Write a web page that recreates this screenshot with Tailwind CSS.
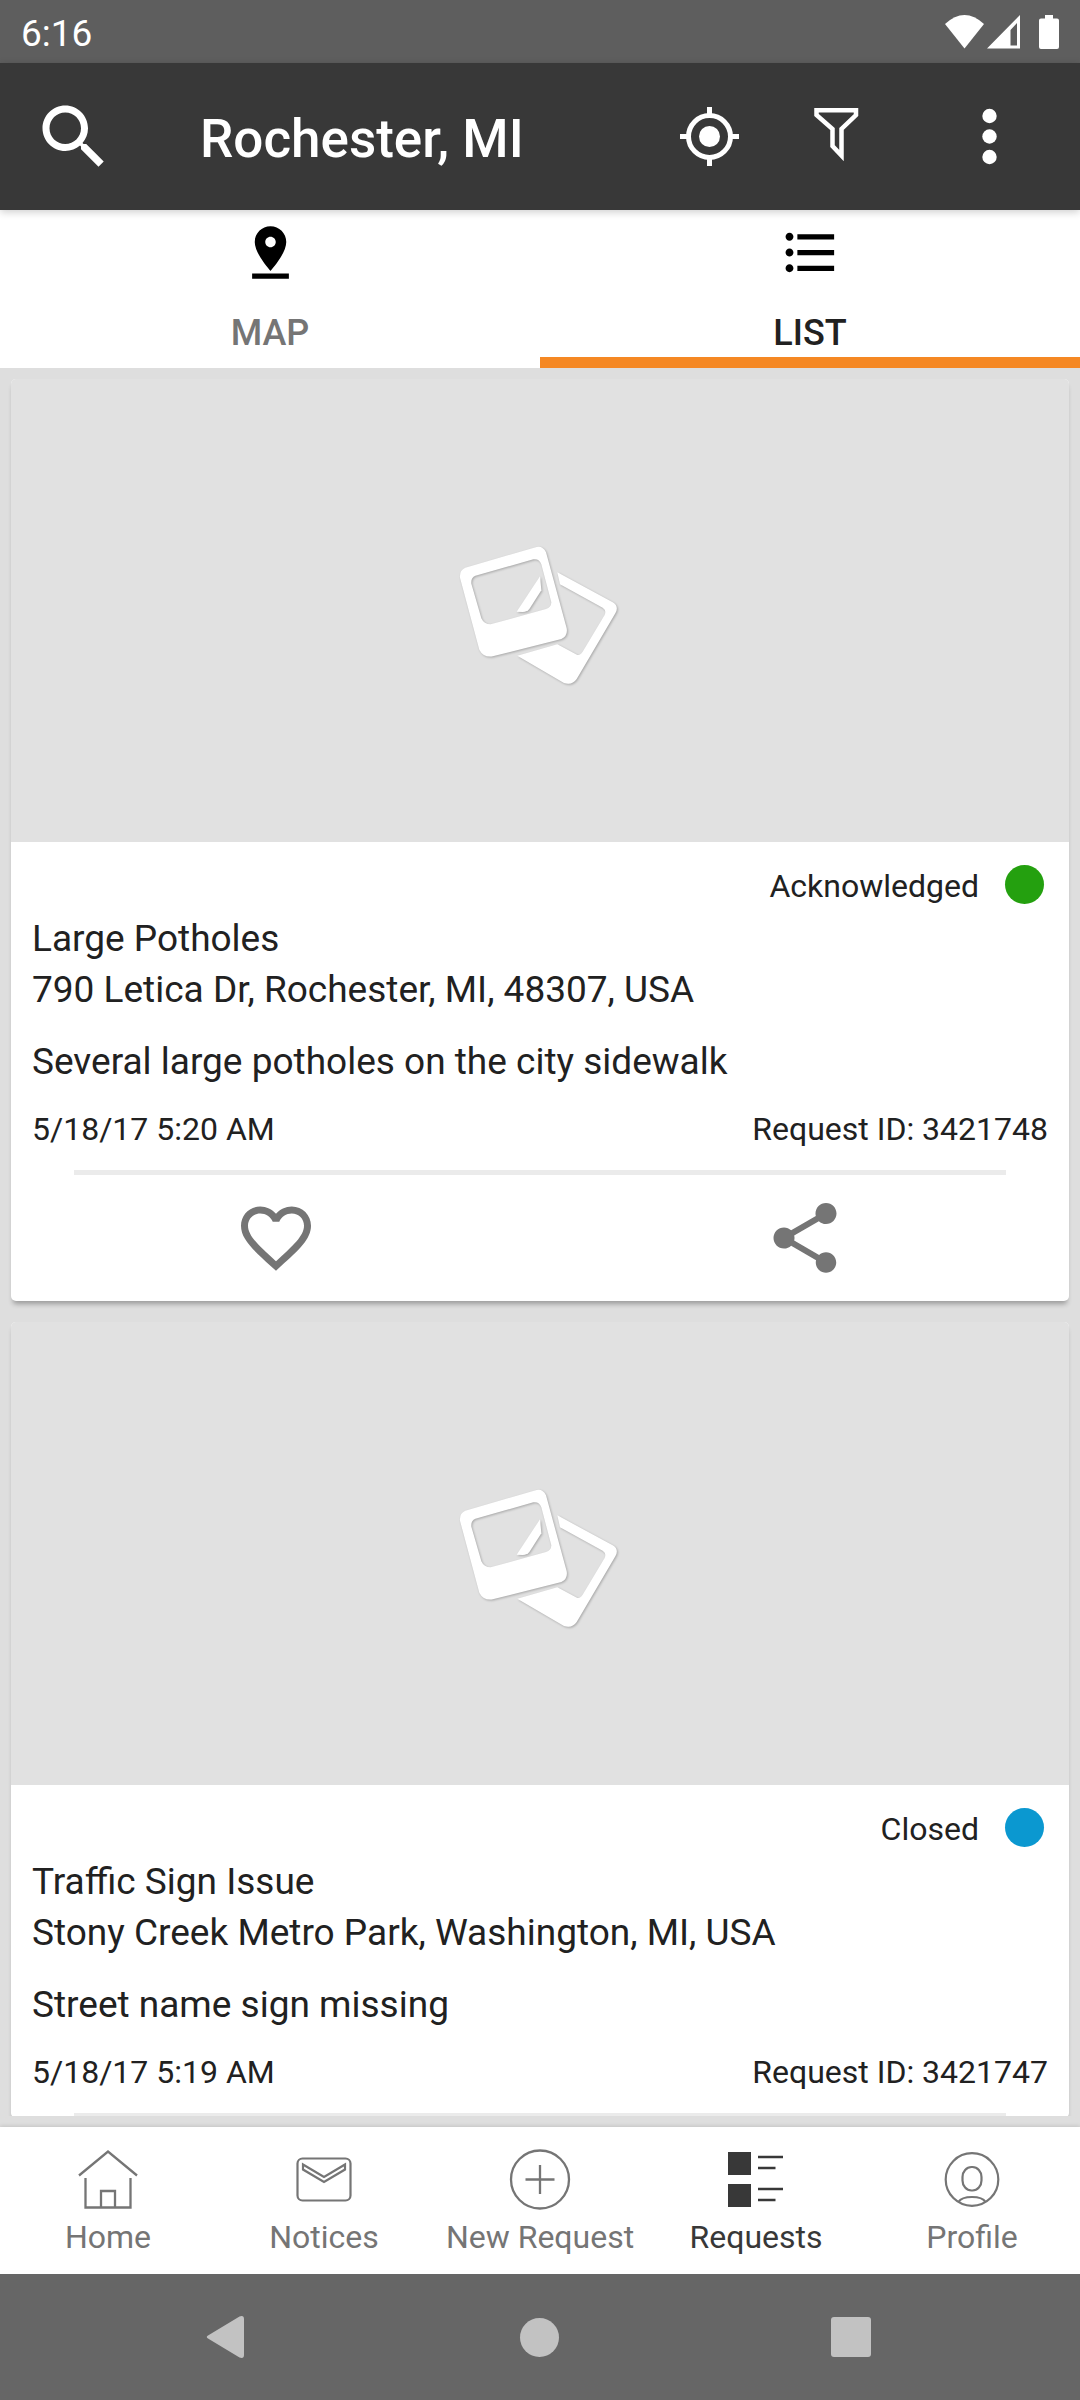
<!DOCTYPE html>
<html lang="en">
  <head>
    <meta charset="UTF-8" />
    <meta name="viewport" content="width=device-width, initial-scale=1.0" />
    <title>Requests - Rochester, MI</title>
    <script src="https://cdn.jsdelivr.net/npm/@tailwindcss/browser@4"></script>
  </head>
  <body class="bg-[#dedede] font-['Roboto',sans-serif] text-[#212121]">
    <!-- Shared placeholder artwork -->
    <svg class="hidden">
      <symbol id="photos" viewBox="0 0 600 540">
        <g fill="#fff" fill-rule="evenodd">
          <path
            d="M352 154L518 244Q538 256 526 277L410 474Q396 494 372 486L232 404L352 370L412 402Q422 402 428 392L494 282Q500 268 488 260L360 190Z"
          />
          <path
            d="M76 140L290 78Q308 74 318 94L380 322Q384 344 364 354L158 406Q130 410 118 386L60 170Q58 148 76 140ZM106 164Q92 170 94 188L124 292Q132 310 152 310L318 264Q334 260 334 244L304 130Q298 112 280 115Z"
          />
          <path d="M230 272L300 166L304 208L268 264Q262 272 248 273Z" />
        </g>
      </symbol>
    </svg>

    <div class="flex flex-col h-screen">
      <!-- Status bar -->
      <div
        class="flex items-center justify-between h-[63px] px-[21px] bg-[#5e5e5e] text-white shrink-0"
      >
        <span class="text-[37px] leading-[44px] pt-1">6:16</span>
        <div class="flex items-center">
          <svg class="w-[39px] h-[34px]" viewBox="0 0 39 34" fill="currentColor">
            <path d="M0 9Q19.500 -9 39 9L19.500 33.500Z" />
          </svg>
          <svg
            class="w-[33px] h-[34px] ml-[3px]"
            viewBox="0 0 33 34"
            fill="currentColor"
            fill-rule="evenodd"
          >
            <path d="M33 0V33.500H0ZM30 8L23.500 15V30.500H30Z" />
          </svg>
          <svg
            class="w-5 h-[34px] ml-[19px]"
            viewBox="0 0 20 34"
            fill="currentColor"
          >
            <path
              d="M6 0h8v3.500h4q2 0 2 2V32q0 2 -2 2H2q-2 0 -2 -2V5.500q0 -2 2 -2h4z"
            />
          </svg>
        </div>
      </div>

      <!-- App bar -->
      <header
        class="relative z-10 flex items-center h-[147px] bg-[#383838] text-white shrink-0 shadow-[0_2px_8px_rgba(0,0,0,0.2)]"
      >
        <button aria-label="Search" class="ml-8">
          <svg class="w-[84px] h-[84px]" viewBox="0 0 24 24" fill="currentColor">
            <path
              d="M15.500 14h-.79l-.28-.27C15.410 12.590 16 11.110 16 9.500 16 5.910 13.090 3 9.500 3S3 5.910 3 9.500 5.910 16 9.500 16c1.610 0 3.090-.59 4.230-1.570l.27.28v.79l5 4.990L20.490 19l-4.990-5zm-6 0C7.010 14 5 11.990 5 9.500S7.010 5 9.500 5 14 7.010 14 9.500 11.990 14 9.500 14z"
            />
          </svg>
        </button>
        <h1 class="flex-1 ml-[84px] pt-1 text-[53px] leading-[62px] font-medium">
          Rochester, MI
        </h1>
        <button aria-label="My location" class="mr-[66px]">
          <svg
            class="w-[63px] h-[63px]"
            viewBox="0 0 63 63"
            fill="none"
            stroke="currentColor"
            stroke-width="5"
          >
            <circle cx="31.500" cy="31.500" r="21" />
            <circle cx="31.500" cy="31.500" r="10.500" fill="currentColor" stroke="none" />
            <path d="M31.500 2v7M31.500 54v7M2 31.500h7M54 31.500h7" />
          </svg>
        </button>
        <button aria-label="Filter" class="mr-[106px]">
          <svg
            class="w-[63px] h-[63px]"
            viewBox="0 0 63 63"
            fill="none"
            stroke="currentColor"
            stroke-width="4.500"
          >
            <path d="M9.500 5.300H49V10L34.500 24V50.500L25.500 41V24L9.500 10Z" />
          </svg>
        </button>
        <button aria-label="More options" class="mr-[77px]">
          <svg class="w-[27px] h-[63px]" viewBox="0 0 27 63" fill="currentColor">
            <circle cx="13.500" cy="11" r="7.200" />
            <circle cx="13.500" cy="31.500" r="7.200" />
            <circle cx="13.500" cy="52" r="7.200" />
          </svg>
        </button>
      </header>

      <!-- Tabs -->
      <nav class="grid grid-cols-2 h-[158px] bg-white shrink-0">
        <button class="flex flex-col items-center pt-[11px] text-[#757575]">
          <svg class="w-[63px] h-[63px]" viewBox="0 0 24 24" fill="#000">
            <path
              d="M18 8c0-3.310-2.690-6-6-6S6 4.690 6 8c0 4.500 6 11 6 11s6-6.500 6-11zm-8 0c0-1.100.9-2 2-2s2 .9 2 2-.89 2-2 2c-1.100 0-2-.9-2-2zM5 20v2h14v-2H5z"
            />
          </svg>
          <span class="mt-[27px] text-[36px] leading-[44px] font-medium">MAP</span>
        </button>
        <button
          class="flex flex-col items-center pt-[11px] border-b-[11px] border-[#f58823]"
        >
          <svg class="w-[63px] h-[63px]" viewBox="0 0 24 24" fill="#000">
            <path
              d="M4 10.500c-.83 0-1.500.67-1.500 1.500s.67 1.500 1.500 1.500 1.500-.67 1.500-1.500-.67-1.500-1.500-1.500zm0-6c-.83 0-1.500.67-1.500 1.500S3.170 7.500 4 7.500 5.500 6.830 5.500 6 4.830 4.500 4 4.500zm0 12c-.83 0-1.500.68-1.500 1.500s.68 1.500 1.500 1.500 1.500-.68 1.500-1.500-.67-1.500-1.500-1.500zM7 19h14v-2H7v2zm0-6h14v-2H7v2zm0-8v2h14V5H7z"
            />
          </svg>
          <span class="mt-[27px] text-[36px] leading-[44px] font-medium">LIST</span>
        </button>
      </nav>

      <!-- Request list -->
      <main class="flex-1 min-h-0 px-[11px] mb-[11px] overflow-hidden">
        <div class="flex flex-col gap-[21px] pt-[11px]">
          <article
            class="bg-white rounded-[5px] overflow-hidden shadow-[0_5px_5px_-2px_rgba(0,0,0,0.3)]"
          >
            <div class="flex items-center justify-center h-[463px] bg-[#e1e1e1]">
              <svg
                class="w-[200px] h-[180px] drop-shadow-[1px_1px_1px_rgba(0,0,0,0.25)]"
              >
                <use href="#photos" />
              </svg>
            </div>
            <div class="px-[21px] pt-[21px]">
              <div class="flex items-end justify-end gap-[26px] h-[42px] mr-1">
                <span class="text-[32px] leading-[38px]">Acknowledged</span>
                <span
                  class="w-[39px] h-[39px] self-center rounded-full bg-[#24a00f]"
                ></span>
              </div>
              <div class="mt-2 text-[37px] leading-[51px]">
                <h2>Large Potholes</h2>
                <p>790 Letica Dr, Rochester, MI, 48307, USA</p>
                <p class="mt-[21px]">Several large potholes on the city sidewalk</p>
              </div>
              <div class="flex justify-between mt-[23px] text-[32px] leading-[38px]">
                <span>5/18/17 5:20 AM</span>
                <span>Request ID: 3421748</span>
              </div>
            </div>
            <div class="mt-[22px] mx-[63px] h-[5px] bg-[#ebebeb]"></div>
            <div class="grid grid-cols-2 py-[21px] text-[#757575]">
              <button aria-label="Like" class="flex justify-center">
                <svg class="w-[84px] h-[84px]" viewBox="0 0 24 24" fill="currentColor">
                  <path
                    d="M16.500 3c-1.740 0-3.410.81-4.500 2.090C10.910 3.810 9.240 3 7.500 3 4.420 3 2 5.420 2 8.500c0 3.780 3.400 6.860 8.550 11.540L12 21.350l1.450-1.320C18.600 15.360 22 12.280 22 8.500 22 5.420 19.580 3 16.500 3zm-4.400 15.550l-.1.100-.1-.1C7.140 14.240 4 11.390 4 8.500 4 6.500 5.500 5 7.500 5c1.540 0 3.040.99 3.570 2.360h1.870C13.460 5.990 14.960 5 16.500 5c2 0 3.500 1.500 3.500 3.500 0 2.890-3.140 5.740-7.900 10.050z"
                  />
                </svg>
              </button>
              <button aria-label="Share" class="flex justify-center">
                <svg class="w-[84px] h-[84px]" viewBox="0 0 24 24" fill="currentColor">
                  <path
                    d="M18 16.080c-.76 0-1.440.3-1.960.77L8.910 12.700c.05-.23.09-.46.09-.7s-.04-.47-.09-.7l7.050-4.110c.54.5 1.250.81 2.040.81 1.660 0 3-1.340 3-3s-1.340-3-3-3-3 1.340-3 3c0 .24.04.47.09.7L8.040 9.810C7.500 9.310 6.790 9 6 9c-1.660 0-3 1.340-3 3s1.340 3 3 3c.79 0 1.500-.31 2.040-.81l7.120 4.160c-.05.21-.08.43-.08.65 0 1.610 1.310 2.920 2.920 2.920s2.920-1.310 2.920-2.920-1.310-2.920-2.920-2.920z"
                  />
                </svg>
              </button>
            </div>
          </article>

          <article
            class="bg-white rounded-[5px] overflow-hidden shadow-[0_5px_5px_-2px_rgba(0,0,0,0.3)]"
          >
            <div class="flex items-center justify-center h-[463px] bg-[#e1e1e1]">
              <svg
                class="w-[200px] h-[180px] drop-shadow-[1px_1px_1px_rgba(0,0,0,0.25)]"
              >
                <use href="#photos" />
              </svg>
            </div>
            <div class="px-[21px] pt-[21px]">
              <div class="flex items-end justify-end gap-[26px] h-[42px] mr-1">
                <span class="text-[32px] leading-[38px]">Closed</span>
                <span
                  class="w-[39px] h-[39px] self-center rounded-full bg-[#0b98d0]"
                ></span>
              </div>
              <div class="mt-2 text-[37px] leading-[51px]">
                <h2>Traffic Sign Issue</h2>
                <p>Stony Creek Metro Park, Washington, MI, USA</p>
                <p class="mt-[21px]">Street name sign missing</p>
              </div>
              <div class="flex justify-between mt-[23px] text-[32px] leading-[38px]">
                <span>5/18/17 5:19 AM</span>
                <span>Request ID: 3421747</span>
              </div>
            </div>
            <div class="mt-[22px] mx-[63px] h-[5px] bg-[#ebebeb]"></div>
          </article>
        </div>
      </main>

      <!-- Bottom navigation -->
      <nav
        class="grid grid-cols-5 h-[147px] bg-white text-[#757575] text-[32px] leading-[38px] shrink-0 shadow-[0_-1px_4px_rgba(0,0,0,0.12)]"
      >
        <a href="#" class="flex flex-col items-center gap-[7px] pt-[21px]">
          <svg
            class="w-[63px] h-[63px]"
            viewBox="0 0 63 63"
            fill="none"
            stroke="currentColor"
            stroke-width="2.300"
          >
            <path
              d="M2 27.500L31 3.500L60 27.500M8.500 30V59.500H53.500V30M24 59V43H38V59"
            />
          </svg>
          <span class="whitespace-nowrap">Home</span>
        </a>
        <a href="#" class="flex flex-col items-center gap-[7px] pt-[21px]">
          <svg
            class="w-[63px] h-[63px]"
            viewBox="0 0 63 63"
            fill="none"
            stroke="currentColor"
            stroke-width="2.200"
          >
            <rect x="4.500" y="10.500" width="53" height="42" rx="5" />
            <path
              d="M10 16.500L31 29L52 16.500V21.500L31 34L10 21.500Z"
            />
          </svg>
          <span class="whitespace-nowrap">Notices</span>
        </a>
        <a href="#" class="flex flex-col items-center gap-[7px] pt-[21px]">
          <svg
            class="w-[63px] h-[63px]"
            viewBox="0 0 63 63"
            fill="none"
            stroke="currentColor"
            stroke-width="2.300"
          >
            <circle cx="31" cy="31.500" r="29" />
            <path d="M31 17v29M16.500 31.500h29" />
          </svg>
          <span class="whitespace-nowrap">New Request</span>
        </a>
        <a
          href="#"
          aria-current="page"
          class="flex flex-col items-center gap-[7px] pt-[21px] text-[#383838]"
        >
          <svg
            class="w-[63px] h-[63px]"
            viewBox="0 0 63 63"
            fill="none"
            stroke="currentColor"
            stroke-width="2.300"
          >
            <path
              fill="currentColor"
              stroke="none"
              d="M3 4h23v23H3zM3 36h23v23H3z"
            />
            <path d="M33 9h25M33 20h17.500M33 41h25M33 52h17.500" />
          </svg>
          <span class="whitespace-nowrap">Requests</span>
        </a>
        <a href="#" class="flex flex-col items-center gap-[7px] pt-[21px]">
          <svg
            class="w-[63px] h-[63px]"
            viewBox="0 0 63 63"
            fill="none"
            stroke="currentColor"
            stroke-width="2.200"
          >
            <circle cx="31" cy="31.500" r="26.300" />
            <rect x="21.500" y="19" width="19" height="23.500" rx="9" ry="10" />
            <path d="M17.500 54Q20.500 49 31 49T44.500 54" />
          </svg>
          <span class="whitespace-nowrap">Profile</span>
        </a>
      </nav>

      <!-- System navigation -->
      <div
        class="flex items-center justify-between h-[126px] pl-[205px] pr-[209px] bg-[#666] text-[#c2c2c2] shrink-0"
      >
        <button aria-label="Back">
          <svg class="w-[42px] h-[44px]" viewBox="0 0 42 44" fill="currentColor">
            <path
              d="M3 20.500L34.500 1.500Q39 0 39 4V40Q39 44 34.500 42.500L3 23.500Q0.500 22 3 20.500Z"
            />
          </svg>
        </button>
        <button
          aria-label="Home screen"
          class="w-[39px] h-[39px] rounded-full bg-[#c2c2c2]"
        ></button>
        <button
          aria-label="Recent apps"
          class="w-10 h-10 rounded-[3px] bg-[#c2c2c2]"
        ></button>
      </div>
    </div>
  </body>
</html>
